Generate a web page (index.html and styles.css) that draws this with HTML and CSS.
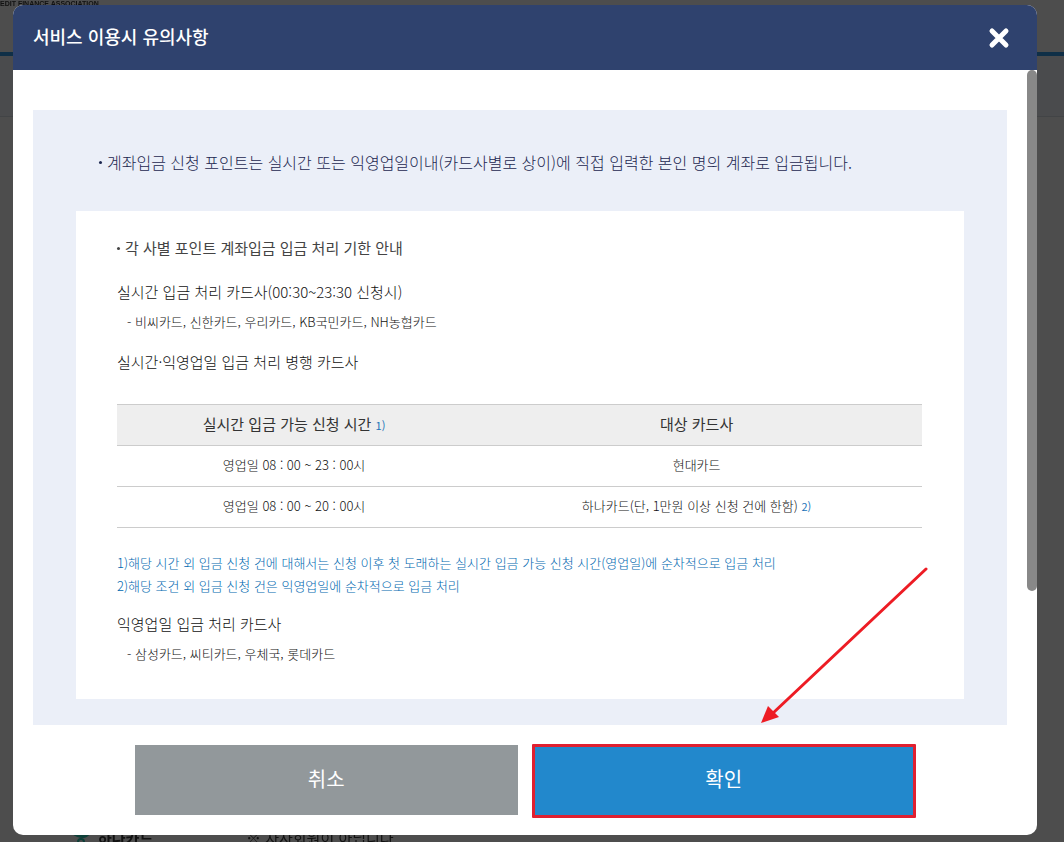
FILE: index.html
```html
<!DOCTYPE html>
<html lang="ko">
<head>
<meta charset="utf-8">
<meta name="viewport" content="width=device-width, initial-scale=1">
<title>서비스 이용시 유의사항</title>
<link rel="stylesheet" href="styles.css">
</head>
<body>
<div class="page" aria-hidden="true">
  <div class="page-top">EDIT FINANCE ASSOCIATION</div>
  <div class="page-nav"></div>
  <div class="page-row">
    <svg class="page-logo" width="20" height="20" viewBox="0 0 20 20">
      <path d="M0 5h18q-3 4-7 4-6 0-11-4z" fill="#0d3f38"/>
      <circle cx="9" cy="13" r="3" fill="none" stroke="#0d3f38" stroke-width="2"/>
    </svg>
    <strong class="page-card">하나카드</strong>
    <span>※ 자사회원이 아닙니다</span>
  </div>
</div>

<div class="overlay">
  <section class="modal" role="dialog" aria-modal="true" aria-labelledby="modal-title">
    <header class="modal-head">
      <h1 class="modal-title" id="modal-title">서비스 이용시 유의사항</h1>
      <button class="close" type="button" aria-label="닫기">
        <svg width="22" height="22" viewBox="0 0 22 22"><path d="M4 4l14 14M18 4L4 18" stroke="#fff" stroke-width="5" stroke-linecap="round"/></svg>
      </button>
    </header>

    <div class="modal-body">
      <div class="panel">
        <p class="intro dot">계좌입금 신청 포인트는 실시간 또는 익영업일이내(카드사별로 상이)에 직접 입력한 본인 명의 계좌로 입금됩니다.</p>
        <div class="card">
          <h2 class="card-title dot">각 사별 포인트 계좌입금 입금 처리 기한 안내</h2>
          <h3 class="group">실시간 입금 처리 카드사(00:30~23:30 신청시)</h3>
          <p class="members">- 비씨카드, 신한카드, 우리카드, KB국민카드, NH농협카드</p>
          <h3 class="group">실시간·익영업일 입금 처리 병행 카드사</h3>
          <table class="times">
            <thead>
              <tr><th class="col-time" scope="col">실시간 입금 가능 신청 시간 <span class="ref">1)</span></th><th scope="col">대상 카드사</th></tr>
            </thead>
            <tbody>
              <tr><td>영업일 08 : 00 ~ 23 : 00시</td><td>현대카드</td></tr>
              <tr><td>영업일 08 : 00 ~ 20 : 00시</td><td>하나카드(단, 1만원 이상 신청 건에 한함) <span class="ref">2)</span></td></tr>
            </tbody>
          </table>
          <div class="notes">
            <p>1)해당 시간 외 입금 신청 건에 대해서는 신청 이후 첫 도래하는 실시간 입금 가능 신청 시간(영업일)에 순차적으로 입금 처리</p>
            <p>2)해당 조건 외 입금 신청 건은 익영업일에 순차적으로 입금 처리</p>
          </div>
          <h3 class="group">익영업일 입금 처리 카드사</h3>
          <p class="members">- 삼성카드, 씨티카드, 우체국, 롯데카드</p>
        </div>
      </div>
      <span class="scroll-thumb"></span>
    </div>

    <footer class="actions">
      <button class="btn btn-cancel" type="button">취소</button>
      <div class="confirm">
        <button class="btn btn-confirm" type="button">확인</button>
        <span class="frame"></span>
        <svg class="arrow" width="168" height="158" viewBox="0 0 168 158">
          <path d="M166 2L12 147" stroke="#ed1c24" stroke-width="3" stroke-linecap="round"/>
          <path d="M1 156L8 139L19 150z" fill="#ed1c24"/>
        </svg>
      </div>
    </footer>
  </section>
</div>
</body>
</html>
```
FILE: styles.css
```css
* {
  box-sizing: border-box;
}

body,
h1,
h2,
h3,
p {
  margin: 0;
}

body,
button {
  font-family: "Noto Sans CJK KR", "Noto Sans", sans-serif;
}

body {
  background: #4d4d4d;
  color: #111;
}

/* Dimmed page behind the dialog */
.page {
  position: fixed;
  inset: 0;
  display: flex;
  flex-direction: column;
  overflow: hidden;
}

.page-top {
  height: 52px;
  font: bold 7px/8px "Liberation Sans", sans-serif;
}

.page-nav {
  height: 65px;
  border-top: 4px solid #0f2f47;
  border-bottom: 1px solid #424446;
  background: #4a4b4d;
}

.page-row {
  display: flex;
  height: 13px;
  margin-top: auto;
  padding-left: 72px;
  font-size: 15px;
  line-height: 18px;
}

.page-logo {
  flex: none;
}

.page-card {
  flex: none;
  width: 154px;
  padding-left: 6px;
}

/* Dialog */
.overlay {
  position: relative;
  padding: 5px 27px 7px 13px;
}

.modal {
  overflow: hidden;
  border-radius: 10px;
  background: #fff;
}

.modal-head {
  display: flex;
  align-items: center;
  justify-content: space-between;
  height: 65px;
  padding: 0 27px 0 20px;
  background: #2f426e;
}

.modal-title {
  padding-bottom: 4px;
  color: #fff;
  font-size: 18px;
  font-weight: 500;
  line-height: 24px;
}

.close {
  display: flex;
  padding: 0;
  border: 0;
  background: none;
  cursor: pointer;
}

.modal-body {
  position: relative;
  padding: 40px 30px 0 20px;
}

.scroll-thumb {
  position: absolute;
  top: 0;
  right: 0;
  width: 10px;
  height: 521px;
  border-radius: 5px;
  background: #888;
}

.panel {
  padding: 40px 43px 26px;
  background: #ebeff8;
}

.intro {
  margin: 0 0 37px 23px;
  color: #1c2750;
  font-size: 16px;
  font-weight: 300;
  line-height: 24px;
}

.dot {
  display: flex;
  align-items: center;
  gap: 5px;
}

.dot::before {
  content: "";
  flex: none;
  width: 3px;
  height: 3px;
  border-radius: 50%;
  background: currentColor;
}

.card {
  padding: 25px 42px 33px 41px;
  background: #fff;
}

.card-title {
  margin-bottom: 20px;
  color: #444;
  font-size: 15px;
  font-weight: 400;
  line-height: 24px;
}

.group {
  font-size: 15px;
  font-weight: 300;
  line-height: 24px;
}

.members {
  margin: 6px 0 16px;
  padding-left: 10px;
  font-size: 13px;
  font-weight: 300;
  line-height: 24px;
}

.members:last-child {
  margin-bottom: 0;
}

.times {
  width: 100%;
  margin-top: 30px;
  border-collapse: collapse;
  border-top: 1px solid #ccc;
}

.times th,
.times td {
  height: 41px;
  padding: 0 0 2px;
  border-bottom: 1px solid #ccc;
  font-size: 13px;
  font-weight: 300;
  line-height: 24px;
  text-align: center;
}

.times th {
  background: #eee;
  color: #333;
  font-size: 15px;
  font-weight: 400;
}

.times .col-time {
  width: 44%;
}

.ref {
  color: #2173b8;
  font-size: 11px;
  font-weight: 400;
}

.notes {
  margin: 23px 0 15px;
  color: #0068b0;
  font-size: 13px;
  font-weight: 300;
  line-height: 23px;
}

.actions {
  display: grid;
  grid-template-columns: 1fr 1fr;
  gap: 15px;
  margin: 0 122px;
  padding: 20px 0;
}

.btn {
  width: 100%;
  height: 70px;
  padding: 0 0 4px;
  border: 0;
  color: #fff;
  font-size: 20px;
  font-weight: 400;
  cursor: pointer;
}

.btn-cancel {
  background: #92989b;
}

.btn-confirm {
  display: block;
  background: #2288cc;
}

/* Highlight frame and arrow pointing at the confirm button */
.confirm {
  position: relative;
}

.frame {
  position: absolute;
  inset: -1px -1px -3px;
  border: 3px solid #e02030;
  border-radius: 1px;
  pointer-events: none;
}

.arrow {
  position: absolute;
  right: -13px;
  bottom: calc(100% + 20px);
  fill: none;
  pointer-events: none;
}
```
